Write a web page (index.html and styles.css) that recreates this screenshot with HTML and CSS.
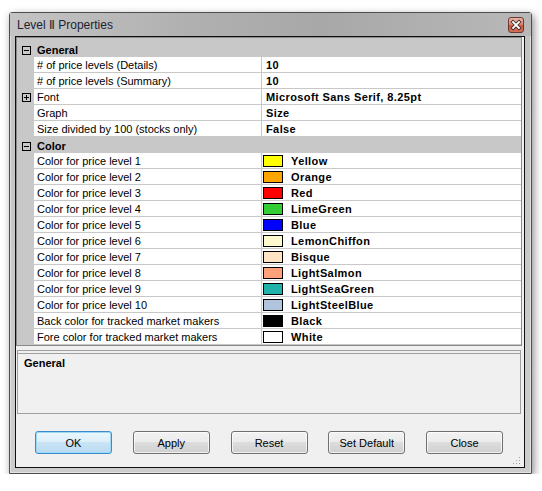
FILE: index.html
```html
<!DOCTYPE html>
<html>
<head>
<meta charset="utf-8">
<title>Level II Properties</title>
<link rel="stylesheet" href="styles.css">
</head>
<body>
<div class="window">
  <div class="titlebar">
    <span class="title">Level Ⅱ Properties</span>
    <span class="close"><svg width="14" height="14" viewBox="0 0 14 14"><path d="M4 4l6 6M10 4l-6 6" stroke="#3a2a2a" stroke-width="3.4" stroke-linecap="square"/><path d="M4 4l6 6M10 4l-6 6" stroke="#fff" stroke-width="1.8" stroke-linecap="square"/></svg></span>
  </div>
  <div class="client">
    <div class="grid">
      <div class="row cat">
        <div class="gutter"><svg class="tg tg-cat" width="9" height="9" viewBox="0 0 9 9"><rect x="0.5" y="0.5" width="8" height="8" fill="none" stroke="#000"/><path d="M2 4.5h5" stroke="#000"/></svg></div>
        <div class="name">General</div>
      </div>
      <div class="row"><div class="gutter"></div><div class="name"># of price levels (Details)</div><div class="value">10</div></div>
      <div class="row"><div class="gutter"></div><div class="name"># of price levels (Summary)</div><div class="value">10</div></div>
      <div class="row"><div class="gutter"><svg class="tg" width="9" height="9" viewBox="0 0 9 9"><rect x="0.5" y="0.5" width="8" height="8" fill="none" stroke="#000"/><path d="M2 4.5h5M4.5 2v5" stroke="#000"/></svg></div><div class="name">Font</div><div class="value">Microsoft Sans Serif, 8.25pt</div></div>
      <div class="row"><div class="gutter"></div><div class="name">Graph</div><div class="value">Size</div></div>
      <div class="row"><div class="gutter"></div><div class="name">Size divided by 100 (stocks only)</div><div class="value">False</div></div>
      <div class="row cat">
        <div class="gutter"><svg class="tg tg-cat" width="9" height="9" viewBox="0 0 9 9"><rect x="0.5" y="0.5" width="8" height="8" fill="none" stroke="#000"/><path d="M2 4.5h5" stroke="#000"/></svg></div>
        <div class="name">Color</div>
      </div>
      <div class="row"><div class="gutter"></div><div class="name">Color for price level 1</div><div class="value"><span class="sw c1"></span>Yellow</div></div>
      <div class="row"><div class="gutter"></div><div class="name">Color for price level 2</div><div class="value"><span class="sw c2"></span>Orange</div></div>
      <div class="row"><div class="gutter"></div><div class="name">Color for price level 3</div><div class="value"><span class="sw c3"></span>Red</div></div>
      <div class="row"><div class="gutter"></div><div class="name">Color for price level 4</div><div class="value"><span class="sw c4"></span>LimeGreen</div></div>
      <div class="row"><div class="gutter"></div><div class="name">Color for price level 5</div><div class="value"><span class="sw c5"></span>Blue</div></div>
      <div class="row"><div class="gutter"></div><div class="name">Color for price level 6</div><div class="value"><span class="sw c6"></span>LemonChiffon</div></div>
      <div class="row"><div class="gutter"></div><div class="name">Color for price level 7</div><div class="value"><span class="sw c7"></span>Bisque</div></div>
      <div class="row"><div class="gutter"></div><div class="name">Color for price level 8</div><div class="value"><span class="sw c8"></span>LightSalmon</div></div>
      <div class="row"><div class="gutter"></div><div class="name">Color for price level 9</div><div class="value"><span class="sw c9"></span>LightSeaGreen</div></div>
      <div class="row"><div class="gutter"></div><div class="name">Color for price level 10</div><div class="value"><span class="sw c10"></span>LightSteelBlue</div></div>
      <div class="row"><div class="gutter"></div><div class="name">Back color for tracked market makers</div><div class="value"><span class="sw c11"></span>Black</div></div>
      <div class="row"><div class="gutter"></div><div class="name">Fore color for tracked market makers</div><div class="value"><span class="sw c12"></span>White</div></div>
    </div>
    <div class="help"><b>General</b></div>
    <div class="buttons">
      <button class="btn default">OK</button>
      <button class="btn">Apply</button>
      <button class="btn">Reset</button>
      <button class="btn">Set Default</button>
      <button class="btn">Close</button>
    </div>
    <svg class="grip" width="9" height="9" viewBox="0 0 9 9"><g fill="#a0a0a0"><rect x="7" y="1" width="1" height="1"/><rect x="4" y="4" width="1" height="1"/><rect x="7" y="4" width="1" height="1"/><rect x="1" y="7" width="1" height="1"/><rect x="4" y="7" width="1" height="1"/><rect x="7" y="7" width="1" height="1"/></g></svg>
  </div>
</div>
</body>
</html>
```
FILE: styles.css
```css
html, body {
  margin: 0;
  padding: 0;
  background: #ffffff;
}
body {
  padding: 12px 0 0 9px;
  font-family: "Liberation Sans", Arial, sans-serif;
  font-size: 11px;
  color: #000;
}
.window {
  width: 523px;
  height: 462px;
  box-sizing: border-box;
  border: 1px solid #4e4e4e;
  border-radius: 3px 3px 0 0;
  background: linear-gradient(to bottom, #c2c2c2, #cdcdcd);
  box-shadow: 2px 3px 9px rgba(0,0,0,0.45), inset 0 0 0 1px rgba(255,255,255,0.45);
  padding: 0 6px 5px 5px;
  display: flex;
  flex-direction: column;
}
.titlebar {
  height: 23px;
  margin: 0 -6px 0 -5px;
  padding: 0 7px 0 7px;
  display: flex;
  align-items: center;
  justify-content: space-between;
  background: linear-gradient(to right, #c4c4c4 0%, #b0b0b0 35%, #a8a8a8 60%, #b8b8b8 100%);
}
.title {
  font-family: "Liberation Sans", "DejaVu Sans", sans-serif;
  font-size: 12px;
  color: #1b2333;
  padding-top: 1px;
}
.close {
  align-self: flex-start;
  margin-top: 4px;
  width: 16px;
  height: 16px;
  box-sizing: border-box;
  border: 1px solid #6b3b33;
  border-radius: 3px;
  background: linear-gradient(to bottom, #eab3a5 0%, #dc8a74 45%, #c9523a 55%, #d4725a 100%);
  display: flex;
  align-items: center;
  justify-content: center;
}
.close svg { display: block; }
.client {
  position: relative;
  width: 510px;
  height: 432px;
  box-sizing: border-box;
  border: 1px solid #101010;
  background: #f0f0f0;
  display: flex;
  flex-direction: column;
}
.grid {
  width: 506px;
  height: 309px;
  box-sizing: border-box;
  border: 1px solid #8a8a8a;
  background: #c8c8c8;
  padding-top: 3px;
}
.row {
  display: flex;
  height: 16px;
  box-sizing: border-box;
  border-bottom: 1px solid #c8c8c8;
  line-height: 14px;
}
.gutter {
  width: 17px;
  flex: none;
  background: #c8c8c8;
  position: relative;
}
.tg {
  display: block;
  margin: 4px 0 0 5px;
}
.tg-cat { margin-top: 5px; }
.name {
  width: 228px;
  flex: none;
  box-sizing: border-box;
  padding: 1px 0 0 3px;
  background: #ffffff;
  border-right: 1px solid #c8c8c8;
  white-space: nowrap;
  overflow: hidden;
}
.value {
  flex: 1;
  background: #ffffff;
  padding: 1px 0 0 4px;
  font-weight: bold;
  letter-spacing: 0.4px;
  white-space: nowrap;
  display: flex;
  align-items: flex-start;
}
.cat .name {
  background: transparent;
  border-right: none;
  font-weight: bold;
  width: auto;
  padding-top: 2px;
}
.sw {
  display: block;
  width: 20px;
  height: 12px;
  box-sizing: border-box;
  border: 1px solid #000;
  margin: 1px 8px 0 -3px;
}
.c1 { background: #ffff00; }
.c2 { background: #ffa500; }
.c3 { background: #ff0000; }
.c4 { background: #32cd32; }
.c5 { background: #0000ff; }
.c6 { background: #fffacd; }
.c7 { background: #ffe4c4; }
.c8 { background: #ffa07a; }
.c9 { background: #20b2aa; }
.c10 { background: #b0c4de; }
.c11 { background: #000000; }
.c12 { background: #ffffff; }
.help {
  margin: 4px 3px 0 1px;
  height: 64px;
  box-sizing: border-box;
  border: 1px solid #a0a0a0;
  box-shadow: inset 0 2px 0 #f0f0f0, inset 0 3px 0 #a0a0a0;
  padding: 6px 0 0 6px;
  line-height: 13px;
}
.buttons {
  margin-top: 17px;
  padding: 0 21px 0 19px;
  display: flex;
  justify-content: space-between;
}
.btn {
  width: 77px;
  height: 23px;
  box-sizing: border-box;
  border: 1px solid #707070;
  border-radius: 3px;
  background: linear-gradient(to bottom, #f2f2f2 0%, #ebebeb 49%, #dddddd 50%, #cfcfcf 100%);
  box-shadow: inset 0 0 0 1px rgba(255,255,255,0.7);
  font-family: "Liberation Sans", Arial, sans-serif;
  font-size: 11px;
  color: #000;
  padding: 0;
}
.btn.default {
  border-color: #3c8ccc;
  box-shadow: inset 0 0 0 1px #9ed8f7;
  background: linear-gradient(to bottom, #eaf6fd 0%, #dceef9 49%, #c9e4f5 50%, #b9dbf1 100%);
}
.grip {
  position: absolute;
  right: 3px;
  bottom: 2px;
}
```
